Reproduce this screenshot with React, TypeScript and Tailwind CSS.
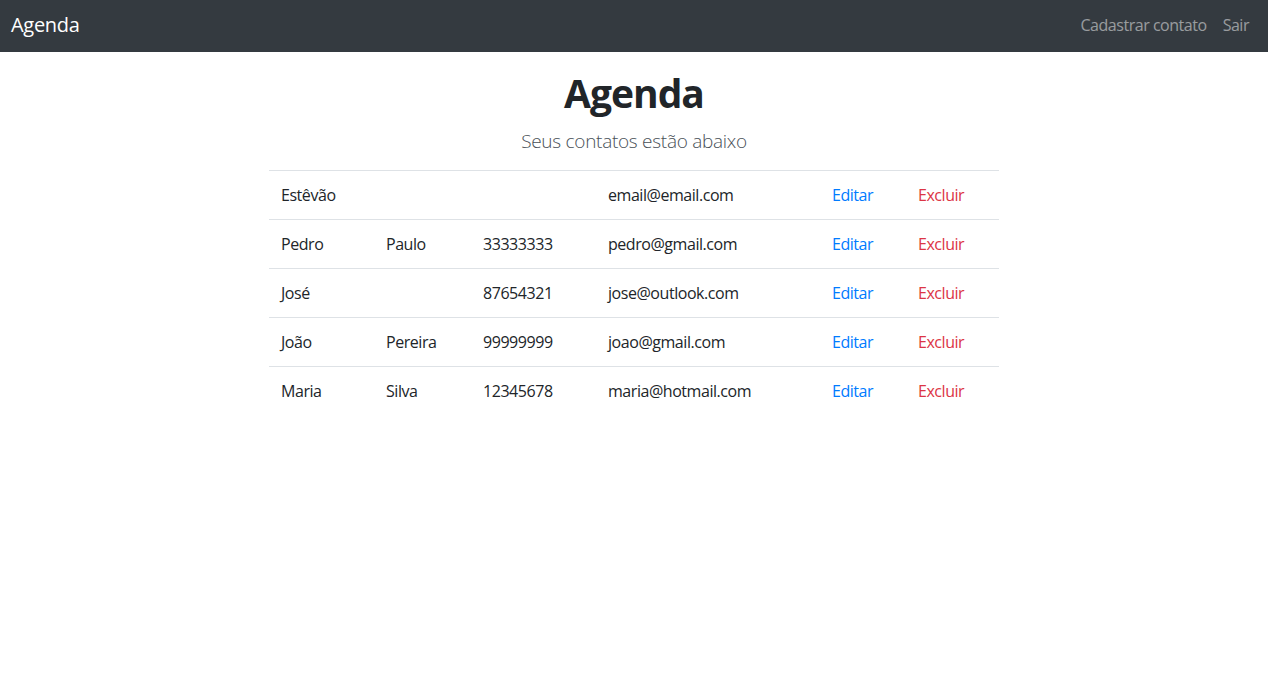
import React from "react";

const rows = [
  ["Estêvão", "", "", "email@email.com"],
  ["Pedro", "Paulo", "33333333", "pedro@gmail.com"],
  ["José", "", "87654321", "jose@outlook.com"],
  ["João", "Pereira", "99999999", "joao@gmail.com"],
  ["Maria", "Silva", "12345678", "maria@hotmail.com"],
];

export default function App() {
  return (
    <div className="min-h-screen bg-white text-[#212529]" style={{ fontFamily: '"Open Sans", "Noto Sans", sans-serif' }}>
      <nav className="flex h-[52px] items-center justify-between bg-[#343a40] pb-[3px] pl-[11px] pr-[19px]">
        <a className="text-[20px] tracking-[-0.3px] text-white">Agenda</a>
        <div className="flex items-center gap-[16px] text-[16px] tracking-[-0.47px] text-white/50">
          <a>Cadastrar contato</a>
          <a>Sair</a>
        </div>
      </nav>
      <div className="mx-auto w-[730px]">
        <h1 className="mt-[16px] text-center text-[39px] font-bold leading-[50px] tracking-[-1px]">Agenda</h1>
        <p className="mt-[8px] text-center text-[19px] font-light leading-[30px] tracking-[-0.28px] text-[#495057]">Seus contatos estão abaixo</p>
        <table className="mt-[14px] w-full border-collapse text-[16px] tracking-[-0.45px]">
          <tbody>
            {rows.map((r, i) => (
              <tr key={i} className="h-[49px] border-t border-[#dee2e6]">
                <td className="w-[105px] px-3">{r[0]}</td>
                <td className="w-[97px] px-3">{r[1]}</td>
                <td className="w-[125px] px-3">{r[2]}</td>
                <td className="w-[224px] px-3">{r[3]}</td>
                <td className="w-[86px] px-3 text-[#007bff]">Editar</td>
                <td className="px-3 text-[#dc3545]">Excluir</td>
              </tr>
            ))}
          </tbody>
        </table>
      </div>
    </div>
  );
}
